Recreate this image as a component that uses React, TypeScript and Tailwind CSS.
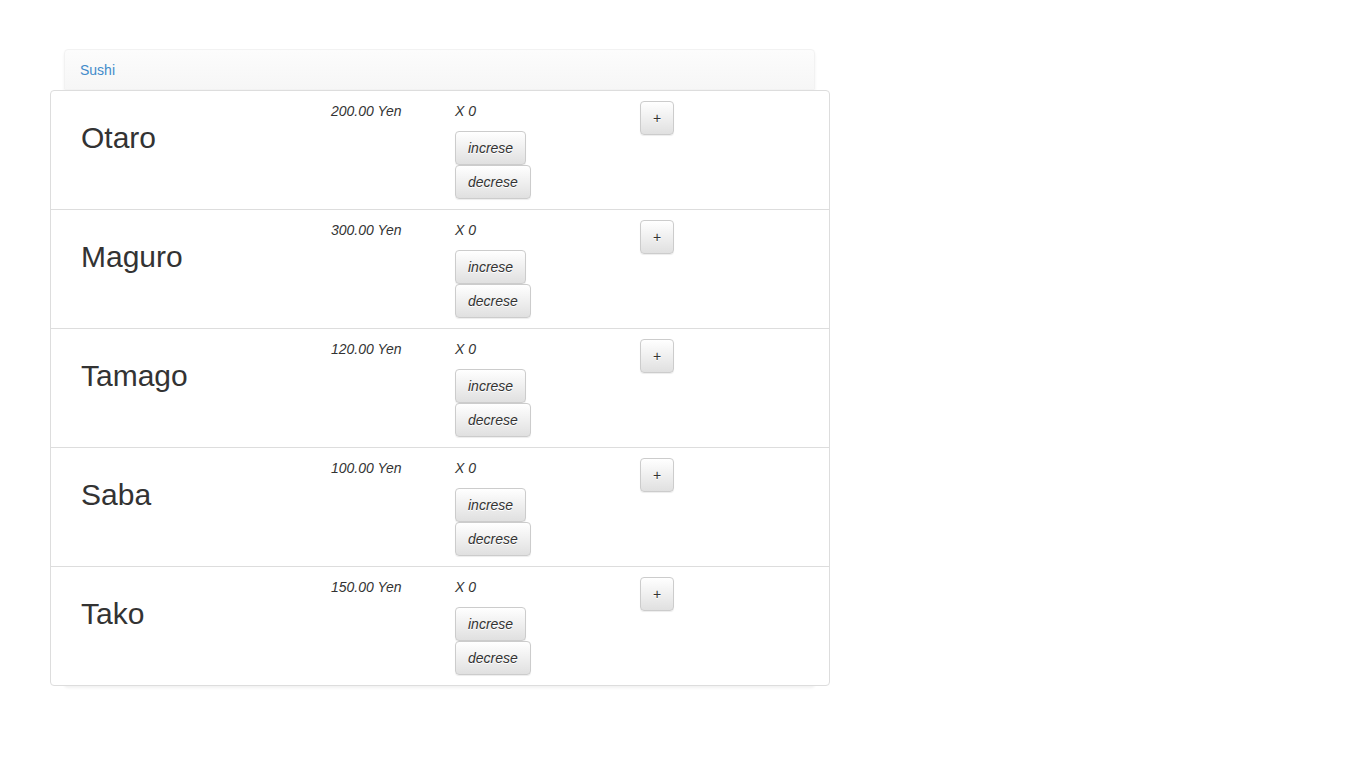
import React from "react";

const items = [
  { name: "Otaro", price: "200.00" },
  { name: "Maguro", price: "300.00" },
  { name: "Tamago", price: "120.00" },
  { name: "Saba", price: "100.00" },
  { name: "Tako", price: "150.00" },
];

const btn =
  "block rounded-[4px] border border-[#ccc] bg-gradient-to-b from-white to-[#e0e0e0] px-3 py-[6px] text-[14px] leading-5 text-[#333] shadow-[inset_0_1px_0_rgba(255,255,255,0.15),0_1px_1px_rgba(0,0,0,0.075)] [text-shadow:0_1px_0_#fff]";

export default function App() {
  return (
    <div
      className="min-h-screen bg-white text-[14px] leading-5 text-[#333]"
      style={{ fontFamily: '"Liberation Sans", Arial, Helvetica, sans-serif' }}
    >
      <div className="pt-[49px] pl-[64px]">
        <div className="w-[751px] rounded-[4px] shadow-[0_2px_3px_rgba(0,0,0,0.06)]">
          <div className="h-[41px] rounded-t-[4px] border border-[#f2f2f2] bg-gradient-to-b from-[#fcfcfc] to-[#f6f6f6] px-[15px] pt-[10px]">
            <span className="text-[#428bca]">Sushi</span>
          </div>
          <div className="-mx-[14px] w-[780px] rounded-[4px] border border-[#ddd] bg-white">
            {items.map((it, i) => (
              <div
                key={it.name}
                className={`flex px-[15px] ${i < items.length - 1 ? "h-[119px] border-b border-[#ddd]" : "h-[118px]"}`}
              >
                <div className="w-[250px] px-[15px] pt-[10px]">
                  <h2 className="mt-5 text-[30px] leading-[33px] font-normal">{it.name}</h2>
                </div>
                <div className="w-[124px] px-[15px] pt-[10px] italic">{it.price} Yen</div>
                <div className="w-[185px] px-[15px] pt-[10px] italic">
                  <div>X 0</div>
                  <button className={`${btn} mt-[10px] italic`}>increse</button>
                  <button className={`${btn} italic`}>decrese</button>
                </div>
                <div className="w-[187px] px-[15px] pt-[10px]">
                  <button className={btn}>+</button>
                </div>
              </div>
            ))}
          </div>
        </div>
      </div>
    </div>
  );
}
